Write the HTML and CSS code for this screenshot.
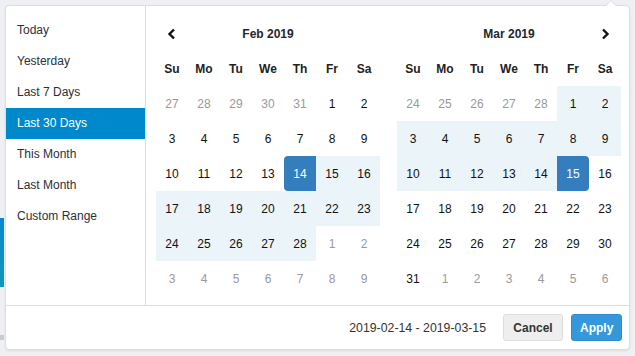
FILE: index.html
```html
<!DOCTYPE html>
<html>
<head>
  <title>Date Range Picker</title>
  <meta name="viewport" content="width=device-width, initial-scale=1.0" />
  <link rel="stylesheet" href="styles.css">
</head>
<body>
  <div class="chart-edge"></div>
  <div class="chart-bar"></div>

  <div class="picker">
    <div class="picker-body">
      <ul class="ranges">
        <li>Today</li>
        <li>Yesterday</li>
        <li>Last 7 Days</li>
        <li class="active">Last 30 Days</li>
        <li>This Month</li>
        <li>Last Month</li>
        <li>Custom Range</li>
      </ul>

      <div class="calendar">
        <table>
          <thead>
            <tr>
              <th class="nav"><svg width="10" height="12" viewBox="0 0 10 12"><polyline points="7,1.5 2.5,6 7,10.5" fill="none" stroke="#111" stroke-width="2.4"/></svg></th>
              <th colspan="5" class="month">Feb 2019</th>
              <th></th>
            </tr>
            <tr class="dow"><th>Su</th><th>Mo</th><th>Tu</th><th>We</th><th>Th</th><th>Fr</th><th>Sa</th></tr>
          </thead>
          <tbody>
            <tr><td class="off">27</td><td class="off">28</td><td class="off">29</td><td class="off">30</td><td class="off">31</td><td>1</td><td>2</td></tr>
            <tr><td>3</td><td>4</td><td>5</td><td>6</td><td>7</td><td>8</td><td>9</td></tr>
            <tr><td>10</td><td>11</td><td>12</td><td>13</td><td class="start">14</td><td class="in">15</td><td class="in">16</td></tr>
            <tr><td class="in">17</td><td class="in">18</td><td class="in">19</td><td class="in">20</td><td class="in">21</td><td class="in">22</td><td class="in">23</td></tr>
            <tr><td class="in">24</td><td class="in">25</td><td class="in">26</td><td class="in">27</td><td class="in">28</td><td class="off">1</td><td class="off">2</td></tr>
            <tr><td class="off">3</td><td class="off">4</td><td class="off">5</td><td class="off">6</td><td class="off">7</td><td class="off">8</td><td class="off">9</td></tr>
          </tbody>
        </table>
      </div>

      <div class="calendar right">
        <table>
          <thead>
            <tr>
              <th></th>
              <th colspan="5" class="month">Mar 2019</th>
              <th class="nav"><svg width="10" height="12" viewBox="0 0 10 12"><polyline points="3,1.5 7.5,6 3,10.5" fill="none" stroke="#111" stroke-width="2.4"/></svg></th>
            </tr>
            <tr class="dow"><th>Su</th><th>Mo</th><th>Tu</th><th>We</th><th>Th</th><th>Fr</th><th>Sa</th></tr>
          </thead>
          <tbody>
            <tr><td class="off">24</td><td class="off">25</td><td class="off">26</td><td class="off">27</td><td class="off">28</td><td class="in">1</td><td class="in">2</td></tr>
            <tr><td class="in">3</td><td class="in">4</td><td class="in">5</td><td class="in">6</td><td class="in">7</td><td class="in">8</td><td class="in">9</td></tr>
            <tr><td class="in">10</td><td class="in">11</td><td class="in">12</td><td class="in">13</td><td class="in">14</td><td class="end">15</td><td>16</td></tr>
            <tr><td>17</td><td>18</td><td>19</td><td>20</td><td>21</td><td>22</td><td>23</td></tr>
            <tr><td>24</td><td>25</td><td>26</td><td>27</td><td>28</td><td>29</td><td>30</td></tr>
            <tr><td>31</td><td class="off">1</td><td class="off">2</td><td class="off">3</td><td class="off">4</td><td class="off">5</td><td class="off">6</td></tr>
          </tbody>
        </table>
      </div>
    </div>

    <div class="picker-footer">
      <span class="selected">2019-02-14 - 2019-03-15</span>
      <button class="btn cancel">Cancel</button>
      <button class="btn apply">Apply</button>
    </div>
  </div>
</body>
</html>
```

FILE: styles.css
```css
body { margin: 0; background: #eef0f4; font-family: "Liberation Sans", Arial, sans-serif; font-size: 12px; color: #333; position: relative; height: 356px; overflow: hidden; }

.chart-edge { position: absolute; left: 0; top: 218px; width: 4px; height: 69px; background: linear-gradient(#0a87d0, #1197b8); }
.chart-bar { position: absolute; left: 0; top: 335px; width: 4px; height: 5px; background: #c9ccd2; }

.picker { position: absolute; left: 5px; top: 5px; width: 623px; background: #fff; border: 1px solid #ddd; border-radius: 4px; box-shadow: 0 1px 2px rgba(0,0,0,0.08); }
.picker::before { content: ""; position: absolute; top: -6px; right: 12px; border-left: 6px solid transparent; border-right: 6px solid transparent; border-bottom: 6px solid #ddd; }
.picker::after { content: ""; position: absolute; top: -5px; right: 13px; border-left: 5px solid transparent; border-right: 5px solid transparent; border-bottom: 5px solid #fff; }

.picker-body { display: flex; }

.ranges { list-style: none; margin: 0; padding: 9px 0 0; width: 139px; border-right: 1px solid #ddd; }
.ranges li { height: 31px; line-height: 31px; padding-left: 11px; color: #2b2f3a; }
.ranges li.active { background: #0088cc; color: #fff; }

.calendar { padding: 10px 0 9px 10px; }
.calendar.right { padding: 10px 8px 9px 17px; }

table { border-collapse: collapse; border-spacing: 0; }
th, td { width: 32px; height: 35px; padding: 0; text-align: center; vertical-align: middle; }
th { font-weight: bold; color: #222; }
th.month { font-size: 12px; color: #23272f; }
th.nav svg { display: block; margin: 0 auto; }
td { color: #111; }
td.off { color: #999; }
td.in { background: #ebf4f8; }
td.start { background: #357ebd; color: #fff; border-radius: 4px 0 0 4px; }
td.end { background: #357ebd; color: #fff; border-radius: 0 4px 4px 0; }

.picker-footer { display: flex; align-items: center; justify-content: flex-end; height: 43px; border-top: 1px solid #ddd; padding-right: 7px; }
.selected { margin-right: 9px; color: #333; font-size: 12.3px; }
.btn { height: 27px; border-radius: 3px; font-family: inherit; font-size: 12px; font-weight: bold; padding: 0 8px; margin-left: 8px; cursor: pointer; }
.btn.cancel { width: 60px; background: #eee; border: 1px solid #ddd; color: #333; }
.btn.apply { width: 51px; background: #3498db; border: 1px solid #2e8ccc; color: #fff; }
```
